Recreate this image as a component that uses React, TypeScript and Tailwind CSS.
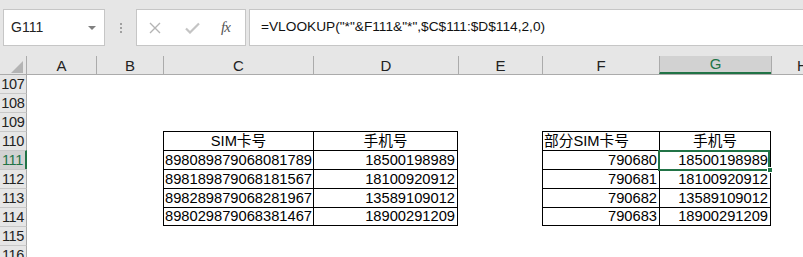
import clsx from 'clsx'

const GRID = 'grid grid-cols-[27px_69px_67px_150px_145px_84px_117px_112px_62px]'
const LETTERS = ['A', 'B', 'C', 'D', 'E', 'F', 'G', 'H']

type CellSpec = { text?: string; align?: 'left' | 'right' | 'center'; table?: boolean; right?: boolean }

const TABLE: Record<number, Record<number, CellSpec>> = {
  110: {
    3: { text: 'SIM卡号', align: 'center', table: true },
    4: { text: '手机号', align: 'center', table: true, right: true },
    6: { text: '部分SIM卡号', align: 'left', table: true },
    7: { text: '手机号', align: 'center', table: true, right: true },
  },
  111: {
    3: { text: '898089879068081789', align: 'left', table: true },
    4: { text: '18500198989', align: 'right', table: true, right: true },
    6: { text: '790680', align: 'right', table: true },
    7: { text: '18500198989', align: 'right', table: true, right: true },
  },
  112: {
    3: { text: '898189879068181567', align: 'left', table: true },
    4: { text: '18100920912', align: 'right', table: true, right: true },
    6: { text: '790681', align: 'right', table: true },
    7: { text: '18100920912', align: 'right', table: true, right: true },
  },
  113: {
    3: { text: '898289879068281967', align: 'left', table: true },
    4: { text: '13589109012', align: 'right', table: true, right: true },
    6: { text: '790682', align: 'right', table: true },
    7: { text: '13589109012', align: 'right', table: true, right: true },
  },
  114: {
    3: { text: '898029879068381467', align: 'left', table: true },
    4: { text: '18900291209', align: 'right', table: true, right: true },
    6: { text: '790683', align: 'right', table: true },
    7: { text: '18900291209', align: 'right', table: true, right: true },
  },
}

const ROWS = [107, 108, 109, 110, 111, 112, 113, 114, 115, 116]

function FormulaBar() {
  return (
    <div className="h-[56px] bg-[#e6e6e6] flex items-start pt-[9px] pl-[3px]">
      {/* Name box */}
      <div className="w-[102px] h-[37px] bg-white border border-[#c6c6c6] flex items-center pl-[7px] pr-[8px]">
        <span className="text-[14px] text-[#222] flex-1">G111</span>
        <span className="w-0 h-0 border-l-[4px] border-r-[4px] border-t-[4px] border-l-transparent border-r-transparent border-t-[#808080]" />
      </div>
      <div className="w-[31px] h-[37px] flex flex-col items-center justify-center gap-[2px]">
        <span className="w-[2px] h-[2px] bg-[#a0a0a0]" />
        <span className="w-[2px] h-[2px] bg-[#a0a0a0]" />
        <span className="w-[2px] h-[2px] bg-[#a0a0a0]" />
      </div>
      {/* Cancel / enter / fx */}
      <div className="w-[110px] h-[37px] bg-white border border-[#c6c6c6] flex items-center">
        <svg width="12" height="12" viewBox="0 0 12 12" className="ml-[12px]">
          <path d="M1 1L11 11M11 1L1 11" stroke="#b4b4b4" strokeWidth="1.4" />
        </svg>
        <svg width="15" height="12" viewBox="0 0 15 12" className="ml-[24px]">
          <path d="M1 6.5L5 10.5L14 1.5" stroke="#c4c4c4" strokeWidth="2.2" fill="none" />
        </svg>
        <span className="ml-[21px] text-[15px] italic text-[#555] font-['Liberation_Serif',serif] tracking-[-1px]">fx</span>
      </div>
      <div className="ml-[3px] flex-1 h-[37px] bg-white border border-[#c6c6c6] border-r-0 flex items-center pl-[11px]">
        <span className="text-[13.7px] text-[#111]">=VLOOKUP("*"&amp;F111&amp;"*",$C$111:$D$114,2,0)</span>
      </div>
    </div>
  )
}

function ColumnHeader() {
  return (
    <div className={clsx(GRID, 'h-[18px] bg-[#e6e6e6]')}>
      <div className="border-r border-[#ababab] relative">
        <svg width="12" height="12" viewBox="0 0 12 12" className="absolute right-[3px] bottom-[1px]">
          <path d="M12 0V12H0Z" fill="#b4b4b4" />
        </svg>
      </div>
      {LETTERS.map((l, i) => (
        <div
          key={l}
          className={clsx(
            'flex items-end justify-center leading-none pb-[1px] text-[15px]',
            i > 0 && 'border-l border-[#ababab]',
            l === 'G' ? 'bg-[#d2d2d2] text-[#217346] border-b-2 border-b-[#217346]' : 'text-[#222]',
          )}
        >
          {l}
        </div>
      ))}
    </div>
  )
}

function Row({ n }: { n: number }) {
  const cells = TABLE[n] ?? {}
  const selectedRow = n === 111
  return (
    <div className={clsx(GRID, 'h-[19px]', n === 107 && 'border-t border-[#ababab]')}>
      <div
        className={clsx(
          'flex items-center justify-center text-[14.5px] leading-none tracking-[-0.3px]',
          n !== 107 && 'border-t border-[#c8c8c8]',
          selectedRow
            ? 'bg-[#d2d2d2] text-[#217346] border-r-2 border-r-[#217346]'
            : 'bg-[#e6e6e6] text-[#222] border-r border-r-[#ababab]',
        )}
      >
        {n}
      </div>
      {LETTERS.map((l, i) => {
        const c = cells[i + 1]
        const selected = selectedRow && l === 'G'
        return (
          <div
            key={l}
            className={clsx(
              'relative flex items-center whitespace-nowrap text-[14.7px] leading-none text-black px-[2px]',
              c?.table && 'border-t border-l border-black',
              c?.right && 'border-r border-black',
              c?.table && n === 114 && 'border-b border-black',
              c?.align === 'center' && 'justify-center',
              c?.align === 'right' && 'justify-end',
              c?.align === 'left' && 'justify-start pl-[1px]',
            )}
          >
            {c?.text}
            {selected && (
              <>
                <span className="absolute z-10 -left-[2px] -top-[1px] right-0 -bottom-[2px] border-2 border-[#217346]" />
                <span className="absolute z-20 -right-[3px] -bottom-[4px] w-[6px] h-[6px] bg-[#217346] border border-white" />
              </>
            )}
          </div>
        )
      })}
    </div>
  )
}

export default function App() {
  return (
    <div className="w-[803px] h-[257px] overflow-hidden bg-white font-['Liberation_Sans','Noto_Sans_CJK_SC',sans-serif]">
      <FormulaBar />
      <ColumnHeader />
      {ROWS.map((n) => (
        <Row key={n} n={n} />
      ))}
    </div>
  )
}
